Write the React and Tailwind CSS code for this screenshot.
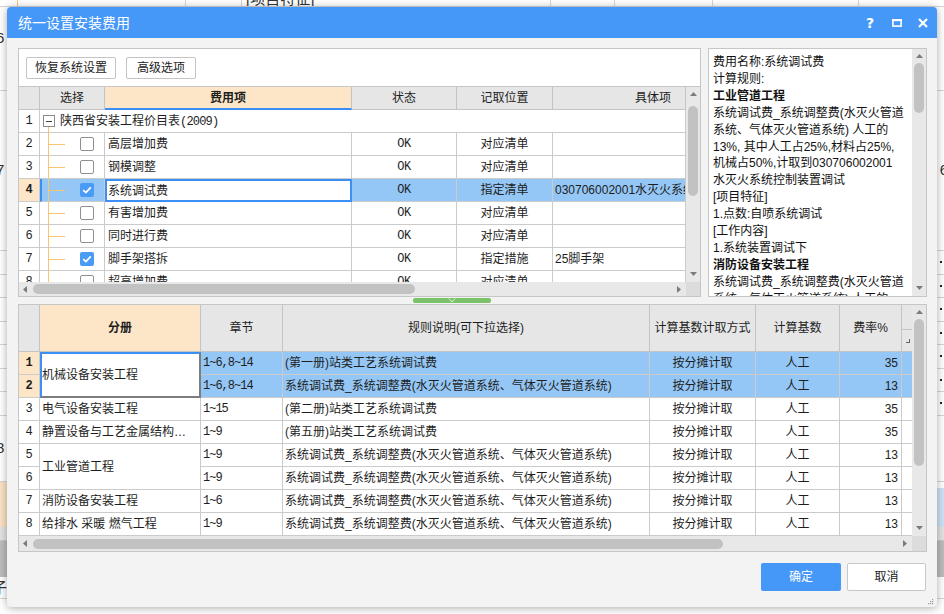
import React from 'react';

const feeRows = [
  { n: 2, name: '高层增加费', on: false, pos: '对应清单', item: '' },
  { n: 3, name: '钢模调整', on: false, pos: '对应清单', item: '' },
  { n: 4, name: '系统调试费', on: true, pos: '指定清单', item: '030706002001水灭火系统控制装置调试', sel: true },
  { n: 5, name: '有害增加费', on: false, pos: '对应清单', item: '' },
  { n: 6, name: '同时进行费', on: false, pos: '对应清单', item: '' },
  { n: 7, name: '脚手架搭拆', on: true, pos: '指定措施', item: '25脚手架' },
  { n: 8, name: '超高增加费', on: false, pos: '对应清单', item: '' },
];

const info = [
  ['费用名称:系统调试费'],
  ['计算规则:'],
  ['工业管道工程', true],
  ['系统调试费_系统调整费(水灭火管道'],
  ['系统、气体灭火管道系统) 人工的'],
  ['13%, 其中人工占25%,材料占25%,'],
  ['机械占50%,计取到030706002001'],
  ['水灭火系统控制装置调试'],
  ['[项目特征]'],
  ['1.点数:自喷系统调试'],
  ['[工作内容]'],
  ['1.系统装置调试下'],
  ['消防设备安装工程', true],
  ['系统调试费_系统调整费(水灭火管道'],
  ['系统、气体灭火管道系统) 人工的'],
];

const LONG = '系统调试费_系统调整费(水灭火管道系统、气体灭火管道系统)';

const rateRows = [
  { n: 1, book: '机械设备安装工程', span: true, ch: '1~6,8~14', rule: '(第一册)站类工艺系统调试费', rate: '35', sel: true },
  { n: 2, ch: '1~6,8~14', rule: LONG, rate: '13', sel: true },
  { n: 3, book: '电气设备安装工程', ch: '1~15', rule: '(第二册)站类工艺系统调试费', rate: '35' },
  { n: 4, book: '静置设备与工艺金属结构…', ch: '1~9', rule: '(第五册)站类工艺系统调试费', rate: '35' },
  { n: 5, book: '工业管道工程', span: true, ch: '1~9', rule: LONG, rate: '13' },
  { n: 6, ch: '1~9', rule: LONG, rate: '13' },
  { n: 7, book: '消防设备安装工程', ch: '1~6', rule: LONG, rate: '13' },
  { n: 8, book: '给排水 采暖 燃气工程', ch: '1~9', rule: LONG, rate: '13' },
];

function Check({ on }) {
  if (!on) return <div className="w-[14px] h-[14px] rounded-[2px] border border-[#8f8f8f] bg-white" />;
  return (
    <div className="w-[14px] h-[14px] rounded-[2px] bg-[#4a9bf6] flex items-center justify-center">
      <svg width="10" height="8" viewBox="0 0 10 8">
        <path d="M1.2 4.2 L3.9 6.6 L8.8 1.4" fill="none" stroke="#fff" strokeWidth="1.8" />
      </svg>
    </div>
  );
}

function Arrow({ dir }) {
  const d = {
    up: 'M0 4 L3.5 0 L7 4 Z',
    down: 'M0 0 L3.5 4 L7 0 Z',
    left: 'M4 0 L0 3.5 L4 7 Z',
    right: 'M0 0 L4 3.5 L0 7 Z',
  }[dir];
  const v = dir === 'up' || dir === 'down';
  return (
    <svg width={v ? 7 : 4} height={v ? 4 : 7} viewBox={v ? '0 0 7 4' : '0 0 4 7'}>
      <path d={d} fill="#7b7b7b" />
    </svg>
  );
}

function VScroll({ top, h }) {
  return (
    <div className="w-[14px] h-full bg-[#e8e8e8] flex flex-col items-center">
      <div className="h-[12px] flex items-center pt-[1px]"><Arrow dir="up" /></div>
      <div className="w-[10px] rounded-full bg-[#c2c2c2]" style={{ marginTop: top, height: h }} />
      <div className="flex-1" />
      <div className="h-[13px] flex items-start pt-[3px]"><Arrow dir="down" /></div>
    </div>
  );
}

function HScroll({ thumb }) {
  return (
    <div className="flex-1 h-full bg-[#e8e8e8] flex items-center">
      <div className="w-[12px] flex justify-center"><Arrow dir="left" /></div>
      <div className={`h-[10px] rounded-full bg-[#c2c2c2] ml-[2px] ${thumb}`} />
      <div className="flex-1" />
      <div className="w-[14px] flex justify-center"><Arrow dir="right" /></div>
    </div>
  );
}

const cell = 'border-r border-b border-[#cbcbcb] flex items-center overflow-hidden whitespace-nowrap';
const head = 'border-r border-b border-[#c4c4c4] bg-[#e6e6e6] flex items-center justify-center';
const mono = "font-['Liberation_Mono',monospace]";

function TopTable() {
  return (
    <div className="grid grid-cols-[21px_65px_247px_105px_96px_133px] auto-rows-[23px] text-[12px] text-[#1e1e1e]">
      <div className={head} />
      <div className={head}>选择</div>
      <div className="border-r border-[#c4c4c4] border-b-2 border-b-[#3d8ff5] bg-[#fde6c8] flex items-center justify-center font-bold">费用项</div>
      <div className={head}>状态</div>
      <div className={head}>记取位置</div>
      <div className={`${head} justify-end pr-[14px]`}>具体项</div>

      <div className={`${cell} justify-center ${mono} text-[12px]`}>1</div>
      <div className={`${cell} col-span-5 relative`}>
        <div className="ml-[3px] w-[12px] h-[12px] border border-[#8a8a8a] bg-white flex items-center justify-center">
          <div className="w-[6px] h-px bg-[#444]" />
        </div>
        <span className="ml-[5px]">陕西省安装工程价目表<span className={`${mono} text-[12px] tracking-[-0.8px]`}>(2009)</span></span>
        <div className="absolute left-[8px] top-[17px] w-px h-[6px] bg-[#f7c66f]" />
      </div>

      {feeRows.map((r) => (
        <React.Fragment key={r.n}>
          <div className={`${cell} justify-center ${mono} text-[12px] ${r.sel ? 'bg-[#fde6c8] font-bold' : ''}`}>{r.n}</div>
          <div className={`border-b border-r border-[#cbcbcb] flex h-full ${r.sel ? 'bg-[#94c7f5] border-l-2 border-l-[#3d8ff5]' : ''}`}>
            <div className={r.sel ? 'w-[6px]' : 'w-[8px]'} />
            <div className="w-[17px] border-l border-[#f7c66f] flex items-center">
              <div className="h-px w-[16px] bg-[#f7c66f]" />
            </div>
            <div className="ml-[15px] self-center"><Check on={r.on} /></div>
          </div>
          <div className={r.sel ? 'border-2 border-[#3d8ff5] bg-white flex items-center pl-[1px] whitespace-nowrap' : `${cell} pl-[3px]`}>{r.name}</div>
          <div className={`${cell} justify-center ${mono} text-[12px] tracking-[-0.5px] ${r.sel ? 'bg-[#94c7f5]' : ''}`}>OK</div>
          <div className={`${cell} justify-center ${r.sel ? 'bg-[#94c7f5]' : ''}`}>{r.pos}</div>
          <div className={`${cell} pl-[2px] ${r.sel ? 'bg-[#94c7f5]' : ''}`}>{r.item}</div>
        </React.Fragment>
      ))}
    </div>
  );
}

function BottomTable() {
  return (
    <div className="grid grid-cols-[21px_161px_82px_367px_106px_84px_62px_10px] grid-rows-[47px_repeat(8,23px)] text-[12px] text-[#1e1e1e]">
      <div className={head} />
      <div className="border-r border-b border-[#c4c4c4] bg-[#fde6c8] flex items-center justify-center font-bold">分册</div>
      <div className={head}>章节</div>
      <div className={head}>规则说明(可下拉选择)</div>
      <div className={head}>计算基数计取方式</div>
      <div className={head}>计算基数</div>
      <div className={head}>费率%</div>
      <div className="border-b border-[#c4c4c4] bg-[#e6e6e6] flex flex-col">
        <div className="h-[25px] border-b border-[#c4c4c4]" />
        <div className="flex-1 flex items-center justify-end pr-[2px]">
          <div className="w-[4px] h-[4px] border-r border-b border-[#666]" />
        </div>
      </div>

      {rateRows.map((r) => {
        const bg = r.sel ? 'bg-[#94c7f5]' : 'bg-white';
        return (
          <React.Fragment key={r.n}>
            <div className={`${cell} justify-center ${mono} text-[12px] ${r.sel ? 'bg-[#fde6c8] font-bold' : 'bg-white'}`}>{r.n}</div>
            {r.book && (
              r.sel ? (
                <div className="row-span-2 bg-white border-2 border-[#3d8ff5] border-r-[#7d7d7d] border-b-[#7d7d7d] flex items-center whitespace-nowrap">
                  {r.book}
                </div>
              ) : (
                <div className={`${cell} pl-[2px] bg-white ${r.span ? 'row-span-2' : ''}`}>{r.book}</div>
              )
            )}
            <div className={`${cell} pl-[2px] ${mono} text-[12px] tracking-[-1px] ${bg}`}>{r.ch}</div>
            <div className={`${cell} pl-[2px] ${bg}`}>{r.rule}</div>
            <div className={`${cell} justify-center ${bg}`}>按分摊计取</div>
            <div className={`${cell} justify-center ${bg}`}>人工</div>
            <div className={`${cell} justify-end pr-[3px] ${bg}`}>{r.rate}</div>
            <div className={`border-b border-[#cbcbcb] ${bg}`} />
          </React.Fragment>
        );
      })}
    </div>
  );
}

function Backdrop() {
  const lines = 'border-b border-[#d6d6d6]';
  return (
    <div className="w-[944px] h-[614px] flex flex-col text-[15px] text-[#333]">
      <div className="h-[7px] flex border-b border-[#d6d6d6] overflow-hidden">
        <div className="w-[18px] border-r border-[#f3c57a]" />
        <div className="w-[168px] border-r border-[#d6d6d6]" />
        <div className="w-[56px] border-r border-[#d6d6d6]" />
        <div className="w-[309px] border-r border-[#d6d6d6] pl-[4px] leading-[14px] -mt-[8px]">[项目特征]</div>
        <div className="w-[64px] border-r border-[#d6d6d6]" />
        <div className="w-[98px] border-r border-[#d6d6d6]" />
        <div className="w-[146px] border-r border-[#d6d6d6]" />
      </div>
      <div className={`h-[84px] ${lines} pt-[20px] -ml-[4px]`}>6</div>
      <div className={`h-[160px] ${lines} flex items-center justify-between -mx-[4px]`}>
        <span>7</span>
        <span>6</span>
      </div>
      {[0, 1, 2, 3, 4, 5, 6].map((i) => (
        <div key={i} className={`h-[23.5px] ${lines} flex items-center justify-end pr-[2px]`}>
          <span className="w-[2px] h-[2px] bg-[#222]" />
        </div>
      ))}
      <div className={`h-[66px] ${lines} flex items-center -ml-[4px]`}>8</div>
      <div className="h-[45px] flex justify-between">
        <div className="w-[10px] bg-[#fbe3c4]" />
        <div className="w-[10px] bg-[#cfe3f7] mt-[6px]" />
      </div>
      <div className="h-[14px] bg-[#e3e3e3] border-b border-[#c8c8c8]" />
      <div className="h-[36px] bg-[#bdbdbd]" />
      <div className="h-[22px] border-b border-[#d6d6d6] flex items-center -ml-[8px] font-['Noto_Sans_CJK_SC',sans-serif]">子</div>
    </div>
  );
}

export default function App() {
  return (
    <div className="relative w-[944px] h-[614px] overflow-hidden bg-white font-['Liberation_Sans','Noto_Sans_CJK_SC',sans-serif]">
      <Backdrop />

      <div className="absolute left-[7px] top-[7px] w-[930px] h-[600px] rounded-[4px] bg-[#f3f3f3] shadow-[0_1px_8px_rgba(0,0,0,0.35)] flex flex-col overflow-hidden">
        {/* title */}
        <div className="h-[31px] bg-[#4597f8] flex items-center pl-[11px] pr-[9px] text-white">
          <span className="text-[14px] font-['Noto_Sans_CJK_SC',sans-serif]">统一设置安装费用</span>
          <div className="flex-1" />
          <span className="text-[14px] font-bold leading-none font-['DejaVu_Sans',sans-serif]">?</span>
          <svg className="ml-[18px]" width="10" height="8" viewBox="0 0 10 8">
            <rect x="0.9" y="1.1" width="8.2" height="6" fill="none" stroke="#fff" strokeWidth="1.6" />
            <rect x="0" y="0" width="10" height="2.2" fill="#fff" />
          </svg>
          <svg className="ml-[16px]" width="10" height="10" viewBox="0 0 10 10">
            <path d="M1 1 L9 9 M9 1 L1 9" stroke="#fff" strokeWidth="2.2" />
          </svg>
        </div>

        <div className="flex-1 flex flex-col pl-[11px] pr-[10px] pt-[10px]">
          {/* top section */}
          <div className="h-[249px] flex gap-[7px]">
            <div className="w-[683px] h-full border border-[#c6c6c6] bg-white flex flex-col">
              <div className="h-[38px] border-b border-[#c6c6c6] flex items-center gap-[10px] pl-[7px] text-[12px] text-[#222]">
                <button className="h-[22px] w-[90px] border border-[#c4c4c4] rounded-[2px] bg-white">恢复系统设置</button>
                <button className="h-[22px] w-[70px] border border-[#c4c4c4] rounded-[2px] bg-white">高级选项</button>
              </div>
              <div className="h-[195px] flex">
                <div className="flex-1 overflow-hidden">
                  <TopTable />
                </div>
                <VScroll top={7} h={90} />
              </div>
              <div className="h-[14px] flex">
                <HScroll thumb="w-[382px]" />
                <div className="w-[14px] bg-[#dcdcdc]" />
              </div>
            </div>

            <div className="w-[219px] h-full border border-[#c6c6c6] bg-white flex">
              <div className="flex-1 overflow-hidden pl-[4px] pt-[5px] text-[12px] leading-[16.9px] text-[#111]">
                {info.map(([t, b], i) => (
                  <div key={i} className={`whitespace-nowrap ${b ? 'font-bold' : ''}`}>{t}</div>
                ))}
              </div>
              <VScroll top={2} h={50} />
            </div>
          </div>

          {/* splitter */}
          <div className="h-[7px] flex items-start">
            <div className="ml-[395px] mt-[1px] w-[78px] h-[5px] rounded-[2px] bg-[#7cc26b] flex justify-center">
              <svg width="8" height="5" viewBox="0 0 8 5">
                <path d="M1 0.5 L4 4 L7 0.5" fill="none" stroke="#d9f0d2" strokeWidth="1" />
              </svg>
            </div>
          </div>

          {/* bottom table */}
          <div className="h-[248px] border border-[#c6c6c6] bg-white flex flex-col">
            <div className="h-[231px] flex">
              <div className="flex-1 overflow-hidden">
                <BottomTable />
              </div>
              <VScroll top={2} h={147} />
            </div>
            <div className="h-[15px] flex">
              <HScroll thumb="w-[690px]" />
              <div className="w-[14px] bg-[#dcdcdc]" />
            </div>
          </div>

          {/* buttons */}
          <div className="mt-[11px] flex justify-end gap-[6px] pr-[1px] text-[12px]">
            <button className="w-[80px] h-[28px] rounded-[2px] bg-[#4597f8] text-white">确定</button>
            <button className="w-[79px] h-[28px] rounded-[2px] bg-white border border-[#c8c8c8] text-[#222]">取消</button>
          </div>
        </div>

        <svg className="absolute right-[3px] bottom-[2px]" width="7" height="7" viewBox="0 0 7 7">
          <rect x="5" y="1" width="1.2" height="1.2" fill="#a0a0a0" />
          <rect x="3" y="3" width="1.2" height="1.2" fill="#a0a0a0" />
          <rect x="5" y="3" width="1.2" height="1.2" fill="#a0a0a0" />
          <rect x="1" y="5" width="1.2" height="1.2" fill="#a0a0a0" />
          <rect x="3" y="5" width="1.2" height="1.2" fill="#a0a0a0" />
          <rect x="5" y="5" width="1.2" height="1.2" fill="#a0a0a0" />
        </svg>
      </div>
    </div>
  );
}
